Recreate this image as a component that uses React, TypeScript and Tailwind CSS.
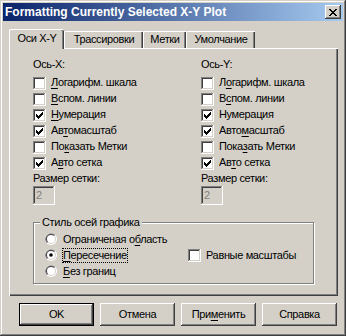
import React from "react"

const raised =
  "shadow-[inset_-1px_-1px_#404040,inset_1px_1px_#ffffff,inset_-2px_-2px_#808080,inset_2px_2px_#d4d0c8]"

function CheckMark() {
  // classic 7x7 pixel check
  const cols = [2, 3, 4, 3, 2, 1, 0]
  return (
    <svg width="7" height="7" viewBox="0 0 7 7" shapeRendering="crispEdges">
      {cols.map((y, x) => (
        <rect key={x} x={x} y={y} width="1" height="3" fill="#000" />
      ))}
    </svg>
  )
}

function Box({ checked }: { checked?: boolean }) {
  return (
    <span className="w-[13px] h-[13px] shrink-0 bg-white flex items-center justify-center shadow-[inset_-1px_-1px_#ffffff,inset_1px_1px_#808080,inset_-2px_-2px_#d4d0c8,inset_2px_2px_#404040]">
      {checked && <CheckMark />}
    </span>
  )
}

function Radio({ checked }: { checked?: boolean }) {
  return (
    <svg width="12" height="12" viewBox="0 0 12 12" className="shrink-0">
      <circle cx="6" cy="6" r="6" fill="#ffffff" />
      <path d="M1.76 10.24 A6 6 0 0 1 10.24 1.76 Z" fill="#808080" />
      <circle cx="6" cy="6" r="5" fill="#d4d0c8" />
      <path d="M2.46 9.54 A5 5 0 0 1 9.54 2.46 Z" fill="#404040" />
      <circle cx="6" cy="6" r="4" fill="#ffffff" />
      {checked && <circle cx="6" cy="6" r="1.8" fill="#000" />}
    </svg>
  )
}

function CheckRow({ checked, children }: { checked?: boolean; children: React.ReactNode }) {
  return (
    <div className="h-[16px] flex items-start">
      <div className="mt-[1px]">
        <Box checked={checked} />
      </div>
      <span className="ml-[5px]">{children}</span>
    </div>
  )
}

function AxisColumn({ title, rows }: { title: string; rows: [boolean, React.ReactNode][] }) {
  return (
    <div>
      <div className="h-[13px]">{title}</div>
      <div className="mt-[5px]">
        {rows.map(([c, label], i) => (
          <CheckRow key={i} checked={c}>
            {label}
          </CheckRow>
        ))}
      </div>
      <div className="h-[13px]">Размер сетки:</div>
      <div className="mt-[1px] w-[22px] h-[19px] pl-[3px] pt-[3px] text-[#808080] shadow-[inset_-1px_-1px_#ffffff,inset_1px_1px_#808080,inset_-2px_-2px_#d4d0c8,inset_2px_2px_#404040]">
        2
      </div>
    </div>
  )
}

function Button({ children, def }: { children: React.ReactNode; def?: boolean }) {
  return (
    <div
      className={
        "w-[75px] h-[23px] flex items-center justify-center " +
        (def ? "border border-black " : "") +
        raised
      }
    >
      {children}
    </div>
  )
}

export default function App() {
  const u = "underline underline-offset-[2px]"
  return (
    <div className="w-[346px] h-[336px] bg-[#d4d0c8] p-[3px] flex flex-col font-['Liberation_Sans',Arial,sans-serif] text-[11px] leading-[13px] tracking-[-0.35px] text-black shadow-[inset_-1px_-1px_#404040,inset_1px_1px_#d4d0c8,inset_-2px_-2px_#808080,inset_2px_2px_#ffffff]">
      {/* title bar */}
      <div className="h-[18px] flex items-center justify-between pl-[2px] pr-[2px] bg-[linear-gradient(to_right,#0a246a,#a6caf0)]">
        <span className="text-white font-bold text-[12px] tracking-normal">Formatting Currently Selected X-Y Plot</span>
        <div className={"w-[16px] h-[14px] flex items-center justify-center bg-[#d4d0c8] " + raised}>
          <svg width="8" height="7" viewBox="0 0 8 7" shapeRendering="crispEdges">
            {[0, 1, 2, 3, 4, 5, 6].map((i) => (
              <g key={i}>
                <rect x={i} y={i} width="2" height="1" fill="#000" />
                <rect x={6 - i} y={i} width="2" height="1" fill="#000" />
              </g>
            ))}
          </svg>
        </div>
      </div>

      {/* tabs */}
      <div className="mt-[8px] ml-[6px] flex items-end h-[19px] relative z-10">
        <div className="w-[55px] h-[20px] -mb-[1px] bg-[#d4d0c8] border-l border-t border-white rounded-tl-[2px] rounded-tr-[2px] pt-[2px] text-center shadow-[inset_-1px_0_#404040,inset_-2px_0_#808080]">
          Оси X-Y
        </div>
        <div className="w-[79px] h-[17px] border-l border-t border-white rounded-tl-[2px] pt-[1px] text-center shadow-[inset_-1px_0_#404040,inset_-2px_0_#808080]">
          Трассировки
        </div>
        <div className="w-[43px] h-[17px] border-l border-t border-white rounded-tl-[2px] pt-[1px] text-center shadow-[inset_-1px_0_#404040,inset_-2px_0_#808080]">
          Метки
        </div>
        <div className="w-[69px] h-[17px] border-l border-t border-white rounded-tl-[2px] pt-[1px] text-center shadow-[inset_-1px_0_#404040,inset_-2px_0_#808080]">
          Умолчание
        </div>
      </div>

      {/* panel */}
      <div className="ml-[6px] w-[329px] h-[248px] border-l border-t border-white pt-[9px] shadow-[inset_-1px_-1px_#404040,inset_-2px_-2px_#808080]">
        <div className="flex">
          <div className="w-[191px] pl-[23px]">
            <AxisColumn
              title="Ось-X:"
              rows={[
                [false, <><u className={u}>Л</u>огарифм. шкала</>],
                [false, <><u className={u}>В</u>спом. линии</>],
                [true, <><u className={u}>Н</u>умерация</>],
                [true, <>Ав<u className={u}>т</u>омасштаб</>],
                [false, <>По<u className={u}>к</u>азать Метки</>],
                [true, <>А<u className={u}>в</u>то сетка</>],
              ]}
            />
          </div>
          <div>
            <AxisColumn
              title="Ось-Y:"
              rows={[
                [false, <>Л<u className={u}>о</u>гарифм. шкала</>],
                [false, <>В<u className={u}>с</u>пом. линии</>],
                [true, <>Нумерация</>],
                [true, <>Авто<u className={u}>м</u>асштаб</>],
                [false, <>Пока<u className={u}>з</u>ать Метки</>],
                [true, <>Ав<u className={u}>т</u>о сетка</>],
              ]}
            />
          </div>
        </div>

        <fieldset className="mt-[11px] ml-[23px] w-[281px] h-[68px] border border-[#808080] px-0 shadow-[inset_1px_1px_#ffffff,1px_1px_#ffffff]">
          <legend className="ml-[6px] px-[2px] bg-[#d4d0c8]">Стиль осей графика</legend>
          <div className="flex pt-[2px] pl-[11px]">
            <div className="w-[143px]">
              <div className="h-[16px] flex items-center">
                <Radio />
                <span className="ml-[6px]">Ограниченая о<u className={u}>б</u>ласть</span>
              </div>
              <div className="h-[16px] flex items-center">
                <Radio checked />
                <span className="ml-[5px] border border-dotted border-black">
                  <u className={u}>П</u>ересечение
                </span>
              </div>
              <div className="h-[16px] flex items-center">
                <Radio />
                <span className="ml-[6px]">
                  <u className={u}>Б</u>ез границ
                </span>
              </div>
            </div>
            <div className="mt-[16px]">
              <div className="h-[16px] flex items-center">
                <Box />
                <span className="ml-[5px]">Равные масштабы</span>
              </div>
            </div>
          </div>
        </fieldset>
      </div>

      {/* buttons */}
      <div className="mt-[7px] ml-[16px] flex gap-[6px]">
        <Button def>OK</Button>
        <Button>Отмена</Button>
        <Button>
          <span>
            При<u className={u}>м</u>енить
          </span>
        </Button>
        <Button>Справка</Button>
      </div>
    </div>
  )
}
